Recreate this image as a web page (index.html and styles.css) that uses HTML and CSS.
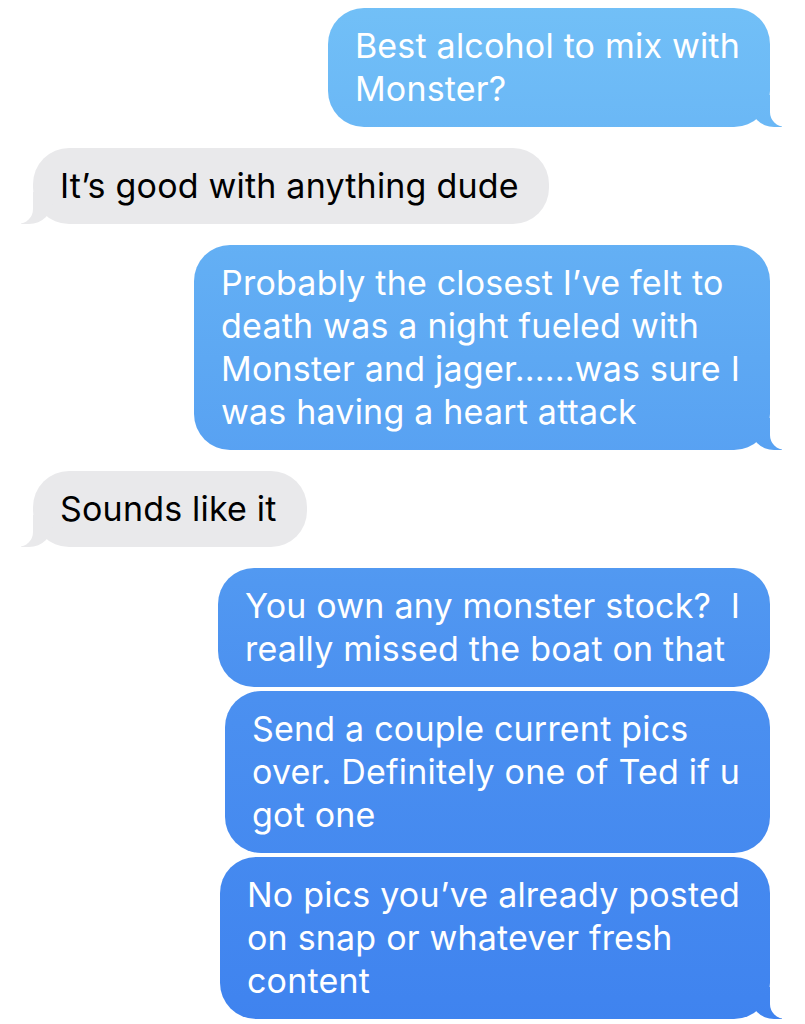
FILE: index.html
```html
<!DOCTYPE html>
<html lang="en">
<head>
    <meta charset="UTF-8">
    <meta name="viewport" content="width=device-width, initial-scale=1.0">
    <title>Messages</title>
    <link rel="stylesheet" href="styles.css">
</head>
<body>
    <div class="thread">
        <div class="bubble sent tail">Best alcohol to mix with<br>Monster?</div>

        <div class="bubble received tail">It’s good with anything dude</div>

        <div class="bubble sent tail">Probably the closest I’ve felt to<br>death was a night fueled with<br>Monster and jager......was sure I<br>was having a heart attack</div>

        <div class="bubble received tail">Sounds like it</div>

        <div class="group">
            <div class="bubble sent">You own any monster stock?&nbsp; I<br>really missed the boat on that</div>
            <div class="bubble sent">Send a couple current pics<br>over. Definitely one of Ted if u<br>got one</div>
            <div class="bubble sent tail">No pics you’ve already posted<br>on snap or whatever fresh<br>content</div>
        </div>
    </div>
</body>
</html>
```

FILE: styles.css
```css
:root {
    --blue-grad: linear-gradient(180deg, #72c0f7 0%, #5da8f3 35%, #4b90f0 68%, #3f83ef 100%);
    --gray: #e9e9eb;
    --white: #ffffff;
    --text-dark: #000000;
}

* {
    margin: 0;
    padding: 0;
    box-sizing: border-box;
}

body {
    font-family: 'Inter', 'Noto Sans', sans-serif;
    background-color: var(--white);
    width: 805px;
    height: 1024px;
    overflow: hidden;
}

.thread {
    display: flex;
    flex-direction: column;
    gap: 21px;
    padding: 8px 35px 0 33px;
}

.group {
    display: flex;
    flex-direction: column;
    align-items: flex-end;
    gap: 4px;
}

.bubble {
    position: relative;
    width: fit-content;
    padding: 16px 30px 17px 27px;
    border-radius: 36px;
    font-size: 34px;
    line-height: 43px;
    letter-spacing: 0.2px;
    white-space: nowrap;
}

.sent {
    align-self: flex-end;
    color: var(--white);
    background: var(--blue-grad);
    background-attachment: fixed;
}

.received {
    align-self: flex-start;
    color: var(--text-dark);
    background: var(--gray);
}

/* tail: colored hook + white mask */
.tail::before,
.tail::after {
    content: "";
    position: absolute;
    bottom: 0;
    height: 32px;
}

.sent.tail::before {
    right: -12px;
    width: 32px;
    background: var(--blue-grad);
    background-attachment: fixed;
    border-bottom-left-radius: 24px;
}

.sent.tail::after {
    right: -28px;
    width: 28px;
    background: var(--white);
    border-bottom-left-radius: 15px;
}

.received.tail::before {
    left: -12px;
    width: 32px;
    background: var(--gray);
    border-bottom-right-radius: 24px;
}

.received.tail::after {
    left: -28px;
    width: 28px;
    background: var(--white);
    border-bottom-right-radius: 15px;
}
```
